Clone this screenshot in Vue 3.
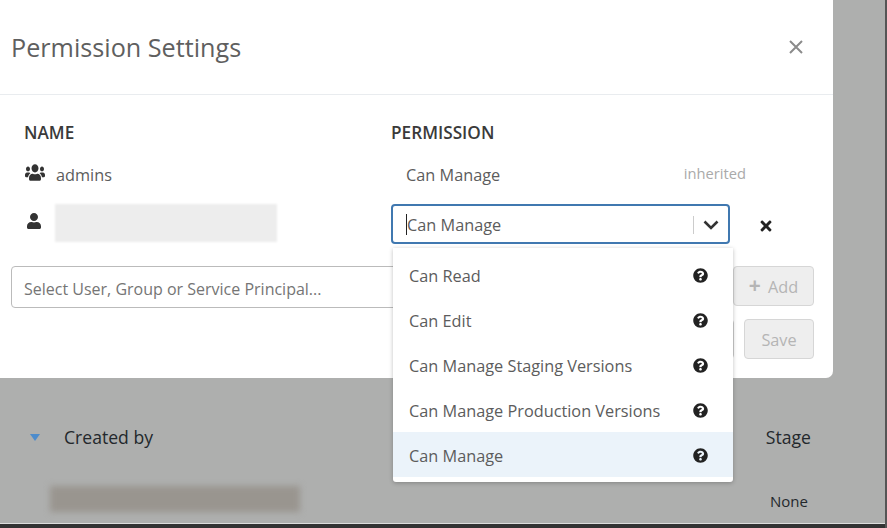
<script setup>
const users = 'M96 224c35.3 0 64-28.7 64-64s-28.7-64-64-64-64 28.7-64 64 28.7 64 64 64zm448 0c35.3 0 64-28.7 64-64s-28.7-64-64-64-64 28.7-64 64 28.7 64 64 64zm32 32h-64c-17.6 0-33.5 7.1-45.1 18.6 40.3 22.1 68.9 62 75.1 109.4h66c17.7 0 32-14.3 32-32v-32c0-35.3-28.7-64-64-64zm-256 0c61.9 0 112-50.1 112-112S381.9 32 320 32 208 82.1 208 144s50.1 112 112 112zm76.8 32h-8.3c-20.8 10-43.9 16-68.5 16s-47.6-6-68.5-16h-8.3C179.6 288 128 339.6 128 403.2V432c0 26.5 21.5 48 48 48h288c26.5 0 48-21.5 48-48v-28.8c0-63.6-51.6-115.2-115.2-115.2zm-223.7-13.4C161.5 263.1 145.6 256 128 256H64c-35.3 0-64 28.7-64 64v32c0 17.7 14.3 32 32 32h65.9c6.3-47.4 34.9-87.3 75.2-109.4z'
const user = 'M224 256c70.7 0 128-57.3 128-128S294.7 0 224 0 96 57.3 96 128s57.3 128 128 128zm89.6 32h-16.7c-22.2 10.2-46.9 16-72.9 16s-50.6-5.8-72.9-16h-16.7C60.2 288 0 348.2 0 422.4V464c0 26.5 21.5 48 48 48h352c26.5 0 48-21.5 48-48v-41.6c0-74.2-60.2-134.4-134.4-134.4z'
const help = 'M504 256c0 136.997-111.043 248-248 248S8 392.997 8 256C8 119.083 119.043 8 256 8s248 111.083 248 248zM262.655 90c-54.497 0-89.255 22.957-116.549 63.758-3.536 5.286-2.353 12.415 2.715 16.258l34.699 26.31c5.205 3.947 12.621 3.008 16.665-2.122 17.864-22.658 30.113-35.797 57.303-35.797 20.429 0 45.698 13.148 45.698 32.958 0 14.976-12.363 22.667-32.534 33.976C247.128 238.528 216 254.941 216 296v4c0 6.627 5.373 12 12 12h56c6.627 0 12-5.373 12-12v-1.333c0-28.462 83.186-29.647 83.186-106.667 0-58.002-60.165-102-116.531-102zM256 338c-25.365 0-46 20.635-46 46 0 25.364 20.635 46 46 46s46-20.636 46-46c0-25.365-20.635-46-46-46z'
const times = 'M242.72 256l100.07-100.07c12.28-12.28 12.28-32.19 0-44.48l-22.24-22.24c-12.28-12.28-32.19-12.28-44.48 0L176 189.28 75.93 89.21c-12.28-12.28-32.19-12.28-44.48 0L9.21 111.45c-12.28 12.28-12.28 32.19 0 44.48L109.28 256 9.21 356.07c-12.28 12.28-12.28 32.19 0 44.48l22.24 22.24c12.28 12.28 32.2 12.28 44.48 0L176 322.72l100.07 100.07c12.28 12.28 32.2 12.28 44.48 0l22.24-22.24c12.28-12.28 12.28-32.19 0-44.48L242.72 256z'

const options = [
  { label: 'Can Read' },
  { label: 'Can Edit' },
  { label: 'Can Manage Staging Versions' },
  { label: 'Can Manage Production Versions' },
  { label: 'Can Manage', selected: true }
]
</script>

<template>
  <div class="page">
    <section class="modal">
      <header class="modal-header">
        <h2>Permission Settings</h2>
        <svg class="close" viewBox="0 0 14 14"><path d="M1 1l12 12M13 1L1 13" /></svg>
      </header>

      <div class="modal-body">
        <div class="perm-grid">
          <div class="col-title">NAME</div>
          <div class="col-title">PERMISSION</div>
          <div></div>
        </div>

        <div class="perm-grid row-admins">
          <div class="who">
            <svg class="users-icon" viewBox="0 0 640 512" preserveAspectRatio="none"><path :d="users" /></svg>
            <span>admins</span>
          </div>
          <div class="static-perm">
            <span>Can Manage</span>
            <span class="inherited">inherited</span>
          </div>
          <div></div>
        </div>

        <div class="perm-grid row-user">
          <div class="who">
            <svg class="user-icon" viewBox="0 0 448 512"><path :d="user" /></svg>
            <div class="redacted-name"></div>
          </div>
          <div class="select">
            <span class="caret"></span>
            <span class="select-value">Can Manage</span>
            <span class="select-sep"></span>
            <svg class="chevron" viewBox="0 0 16 10"><path d="M1.5 1.5L8 8l6.5-6.5" /></svg>
          </div>
          <svg class="remove" viewBox="0 0 352 512"><path :d="times" /></svg>
        </div>

        <div class="add-row">
          <div class="principal-input">Select User, Group or Service Principal...</div>
          <div class="btn add-btn"><span class="plus">+</span> Add</div>
        </div>

        <div class="footer-row">
          <div class="btn cancel-btn">Cancel</div>
          <div class="btn save-btn">Save</div>
        </div>
      </div>
    </section>

    <div class="behind">
      <div class="behind-head">
        <span class="sort-arrow"></span>
        <span class="created">Created by</span>
        <span class="stage">Stage</span>
      </div>
      <div class="behind-row">
        <div class="redacted-creator"></div>
        <span class="none">None</span>
      </div>
    </div>
    <div class="bottom-bar"></div>

    <ul class="menu">
      <li v-for="opt in options" :key="opt.label" :class="{ selected: opt.selected }">
        <span>{{ opt.label }}</span>
        <svg viewBox="0 0 512 512"><path :d="help" /></svg>
      </li>
    </ul>
  </div>
</template>

<style scoped>
.page {
  position: relative;
  width: 887px;
  height: 528px;
  overflow: hidden;
  background: #aeafae;
  border-right: 2px solid #555;
  box-sizing: border-box;
  display: flex;
  flex-direction: column;
  font-family: "Open Sans", sans-serif;
  font-size: 16.3px;
  color: #5c5c5c;
}

.modal {
  width: 833px;
  height: 378px;
  flex: none;
  background: #fff;
  border-bottom-right-radius: 7px;
  box-sizing: border-box;
}

.modal-header {
  height: 95px;
  box-sizing: border-box;
  border-bottom: 1px solid #e9ecef;
  padding: 0 30px 0 11px;
  display: flex;
  align-items: center;
  justify-content: space-between;
}

.modal-header h2 {
  margin: 0;
  font-weight: 400;
  font-size: 25.2px;
  color: #5f5f5f;
}

.close {
  width: 14px;
  height: 14px;
}

.close path {
  fill: none;
  stroke: #8b8b8b;
  stroke-width: 2;
}

.modal-body {
  padding: 26px 0 0 24px;
}

.perm-grid {
  display: grid;
  grid-template-columns: 367px 339px 1fr;
  align-items: center;
}

.col-title {
  font-weight: 600;
  font-size: 17.2px;
  line-height: 24px;
  color: #3a3a3a;
}

.row-admins {
  height: 30px;
  margin-top: 15px;
}

.who {
  display: flex;
  align-items: center;
}

.who svg {
  fill: #333;
  flex: none;
}

.users-icon {
  width: 20px;
  height: 19px;
  margin: -6px 11px 0 1px;
}

.user-icon {
  width: 14px;
  height: 16px;
  margin: -7px 14px 0 3px;
}

.static-perm {
  display: flex;
  justify-content: space-between;
  padding-left: 15px;
  margin-right: -16px;
}

.inherited {
  color: #aaa;
  font-size: 14.7px;
  margin-top: -1px;
}

.row-user {
  margin-top: 14px;
}

.redacted-name {
  width: 222px;
  height: 38px;
  margin-top: -3px;
  background: #ededed;
  filter: blur(1px);
}

.select {
  position: relative;
  height: 40px;
  box-sizing: border-box;
  border: 2px solid #4078b0;
  border-radius: 4px;
  display: flex;
  align-items: center;
  padding: 1px 9px 0 14px;
}

.select-value {
  flex: 1;
}

.caret {
  position: absolute;
  left: 13px;
  top: 8px;
  width: 1px;
  height: 21px;
  background: #222;
}

.select-sep {
  width: 1px;
  height: 18px;
  background: #ccc;
  margin-right: 9px;
}

.chevron {
  width: 16px;
  height: 10px;
}

.chevron path {
  fill: none;
  stroke: #333;
  stroke-width: 2.6;
}

.remove {
  width: 12px;
  height: 16px;
  margin: 4px 0 0 30px;
  fill: #222;
}

.add-row {
  display: flex;
  margin: 22px 19px 0 -13px;
  gap: 8px;
}

.principal-input {
  flex: 1;
  height: 42px;
  box-sizing: border-box;
  border: 1px solid #bbb;
  border-radius: 4px;
  padding-left: 12px;
  line-height: 44px;
  font-size: 16px;
  color: #757575;
}

.btn {
  box-sizing: border-box;
  border: 1px solid #d6d6d6;
  border-radius: 4px;
  background: #eeeeee;
  color: #b5b5b5;
  text-align: center;
  height: 40px;
  line-height: 40px;
}

.add-btn {
  width: 81px;
}

.plus {
  font-weight: 700;
  font-size: 21px;
  line-height: 1;
  margin-right: 3px;
}

.footer-row {
  display: flex;
  justify-content: flex-end;
  gap: 10px;
  margin: 11px 19px 0 0;
}

.cancel-btn {
  width: 90px;
  background: #fff;
  color: #555;
  border-color: #ccc;
}

.save-btn {
  width: 70px;
}

.behind {
  flex: 1;
  color: #23282c;
}

.behind-head {
  display: flex;
  align-items: center;
  height: 60px;
  margin-top: 29px;
  padding: 0 74px 0 30px;
  font-size: 17.6px;
  font-weight: 500;
}

.sort-arrow {
  width: 0;
  height: 0;
  border-left: 5px solid transparent;
  border-right: 5px solid transparent;
  border-top: 7px solid #4d8ccc;
  margin-right: 24px;
}

.created {
  flex: 1;
}

.behind-row {
  display: flex;
  align-items: center;
  justify-content: space-between;
  padding: 19px 77px 0 50px;
  font-size: 15px;
}

.none {
  margin-top: 3px;
}

.redacted-creator {
  width: 250px;
  height: 26px;
  background: #99958f;
  filter: blur(3px);
}

.bottom-bar {
  height: 4px;
  flex: none;
  background: #333;
  border-top: 1px solid #ddd;
}

.menu {
  position: absolute;
  left: 393px;
  top: 248px;
  width: 340px;
  height: 234px;
  box-sizing: border-box;
  margin: 0;
  padding: 4px 0;
  list-style: none;
  background: #fff;
  box-shadow: 0 1px 4px rgba(0, 0, 0, 0.25);
  border-radius: 0 0 3px 3px;
}

.menu li {
  height: 45px;
  box-sizing: border-box;
  padding: 2px 25px 0 16px;
  display: flex;
  align-items: center;
  justify-content: space-between;
}

.menu li.selected {
  background: #ebf3fa;
}

.menu svg {
  width: 15px;
  height: 15px;
  fill: #222;
}
</style>

<style>
html, body {
  margin: 0;
  background: #aeafae;
}
</style>
